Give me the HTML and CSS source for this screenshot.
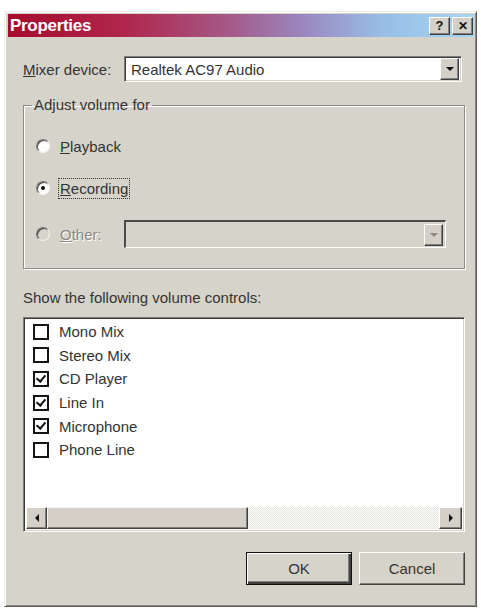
FILE: index.html
```html
<!DOCTYPE html>
<html lang="en">
<head>
    <meta charset="UTF-8">
    <title>Properties</title>
    <link rel="stylesheet" href="styles.css">
</head>
<body>
    <div class="ventana">
        <div class="titulo">
            <span class="titulo-texto">Properties</span>
            <div class="titulo-botones">
                <span class="boton-titulo">?</span>
                <span class="boton-titulo cerrar">✕</span>
            </div>
        </div>

        <div class="contenido">
            <div class="fila-mixer">
                <span class="etiqueta-mixer"><u>M</u>ixer device:</span>
                <div class="combo">
                    <span class="combo-texto">Realtek AC97 Audio</span>
                    <span class="combo-flecha"><i class="triangulo"></i></span>
                </div>
            </div>

            <fieldset class="grupo">
                <legend>Adjust volume for</legend>
                <div class="opcion">
                    <span class="radio"></span>
                    <span><u>P</u>layback</span>
                </div>
                <div class="opcion">
                    <span class="radio marcado"></span>
                    <span class="foco"><u>R</u>ecording</span>
                </div>
                <div class="opcion desactivada">
                    <span class="radio-etiqueta">
                        <span class="radio"></span>
                        <span><u>O</u>ther:</span>
                    </span>
                    <div class="combo combo-off">
                        <span class="combo-texto"></span>
                        <span class="combo-flecha"><i class="triangulo"></i></span>
                    </div>
                </div>
            </fieldset>

            <p class="texto-lista">Show the following volume controls:</p>

            <div class="lista">
                <div class="items">
                    <div class="item"><span class="check"></span>Mono Mix</div>
                    <div class="item"><span class="check"></span>Stereo Mix</div>
                    <div class="item"><span class="check si"></span>CD Player</div>
                    <div class="item"><span class="check si"></span>Line In</div>
                    <div class="item"><span class="check si"></span>Microphone</div>
                    <div class="item"><span class="check"></span>Phone Line</div>
                </div>
                <div class="scroll">
                    <span class="scroll-boton"><i class="flecha-izq"></i></span>
                    <span class="scroll-barra"></span>
                    <span class="scroll-pista"></span>
                    <span class="scroll-boton"><i class="flecha-der"></i></span>
                </div>
            </div>

            <div class="acciones">
                <button class="boton defecto">OK</button>
                <button class="boton">Cancel</button>
            </div>
        </div>
    </div>
</body>
</html>
```

FILE: styles.css
```css
body {
    margin: 0;
    padding: 11px 4px 0 4px;
    background-color: #ffffff;
    font-family: "Liberation Sans", Arial, sans-serif;
    font-size: 15px;
    color: #333333;
}
.ventana {
    width: 473px;
    height: 596px;
    box-sizing: border-box;
    background-color: #d6d3cb;
    border: 1px solid;
    border-color: #eeede8 #5a5a5a #5a5a5a #eeede8;
    box-shadow: inset 1px 1px #ffffff, inset -1px -1px #8e8c86;
    padding: 2px;
    display: flex;
    flex-direction: column;
}
.titulo {
    height: 23px;
    margin-left: 1px;
    display: flex;
    align-items: center;
    justify-content: space-between;
    background: linear-gradient(to right, #a60c2c 0%, #b0264c 25%, #a55887 47%, #9a86bd 63%, #98bde6 80%, #a6d6f0 100%);
}
.titulo-texto {
    color: #ffffff;
    font-weight: bold;
    font-size: 17px;
    padding-left: 2px;
    letter-spacing: -0.3px;
}
.titulo-botones {
    display: flex;
    gap: 2px;
    padding-right: 1px;
}
.boton-titulo {
    width: 21px;
    height: 18px;
    box-sizing: border-box;
    background-color: #d4d0c8;
    border: 1px solid;
    border-color: #ffffff #404040 #404040 #ffffff;
    box-shadow: inset -1px -1px #808080;
    display: flex;
    align-items: center;
    justify-content: center;
    font-weight: bold;
    font-size: 13px;
    color: #111;
}
.cerrar {
    font-size: 12px;
}
.contenido {
    flex: 1;
    display: flex;
    flex-direction: column;
    padding: 19px 9px 0 16px;
}
.fila-mixer {
    display: flex;
    align-items: center;
    height: 26px;
}
.etiqueta-mixer {
    width: 101px;
}
.combo {
    flex: 1;
    height: 26px;
    box-sizing: border-box;
    margin-right: 3px;
    background-color: #ffffff;
    border: 1px solid;
    border-color: #7f7d78 #ffffff #ffffff #7f7d78;
    box-shadow: inset 1px 1px #3a3a3a, inset -1px -1px #d4d0c8;
    display: flex;
    align-items: center;
    padding: 2px;
}
.combo-texto {
    flex: 1;
    padding-left: 4px;
}
.combo-flecha {
    width: 19px;
    height: 22px;
    box-sizing: border-box;
    background-color: #d4d0c8;
    border: 1px solid;
    border-color: #ffffff #404040 #404040 #ffffff;
    box-shadow: inset -1px -1px #808080;
    display: flex;
    align-items: center;
    justify-content: center;
}
.triangulo {
    width: 0;
    height: 0;
    border-left: 4px solid transparent;
    border-right: 4px solid transparent;
    border-top: 4px solid #111;
}
.grupo {
    margin: 15px 0 0 0;
    padding: 23px 18px 20px 12px;
    border: 1px solid #8f8c86;
    box-shadow: inset 1px 1px #ffffff, 1px 1px #ffffff;
    display: flex;
    flex-direction: column;
    gap: 22px;
}
.grupo legend {
    margin-left: -4px;
    padding: 0 2px;
    line-height: 16px;
}
.opcion {
    display: flex;
    align-items: center;
    gap: 10px;
    height: 20px;
}
.radio {
    width: 14px;
    height: 14px;
    box-sizing: border-box;
    border-radius: 50%;
    background-color: #ffffff;
    border: 1px solid;
    border-color: #7a7873 #f4f4f4 #f4f4f4 #7a7873;
    box-shadow: inset 1px 1px #404040;
    display: flex;
    align-items: center;
    justify-content: center;
}
.marcado::after {
    content: "";
    width: 4px;
    height: 4px;
    border-radius: 50%;
    background-color: #111;
}
.foco {
    outline: 1px dotted #333;
    outline-offset: 1px;
}
.desactivada {
    height: 28px;
    gap: 0;
    color: #8c8982;
    text-shadow: 1px 1px #ffffff;
}
.radio-etiqueta {
    width: 88px;
    display: flex;
    align-items: center;
    gap: 10px;
}
.desactivada .radio {
    background-color: #d6d3cb;
}
.combo-off {
    height: 28px;
    margin-right: 0;
    background-color: #d6d3cb;
    border-width: 2px 1px 1px 2px;
    border-color: #4a4a4a #ffffff #ffffff #4a4a4a;
    box-shadow: none;
}
.combo-off .triangulo {
    border-top-color: #8c8982;
}
.texto-lista {
    margin: 21px 0 0 0;
    line-height: 16px;
}
.lista {
    margin-top: 11px;
    height: 215px;
    box-sizing: border-box;
    background-color: #ffffff;
    border: 1px solid;
    border-color: #7f7d78 #ffffff #ffffff #7f7d78;
    box-shadow: inset 1px 1px #3a3a3a, inset -1px -1px #d4d0c8;
    padding: 2px;
    display: flex;
    flex-direction: column;
}
.items {
    flex: 1;
    padding-left: 7px;
}
.item {
    height: 23.6px;
    display: flex;
    align-items: center;
    gap: 10px;
}
.check {
    width: 16px;
    height: 16px;
    box-sizing: border-box;
    border: 2px solid #151515;
    position: relative;
}
.si::after {
    content: "";
    position: absolute;
    left: 3px;
    top: 0px;
    width: 4px;
    height: 7px;
    border-right: 2px solid #151515;
    border-bottom: 2px solid #151515;
    transform: rotate(40deg);
}
.scroll {
    height: 22px;
    display: flex;
}
.scroll-boton {
    width: 21px;
    box-sizing: border-box;
    background-color: #d4d0c8;
    border: 1px solid;
    border-color: #ffffff #404040 #404040 #ffffff;
    box-shadow: inset -1px -1px #808080;
    display: flex;
    align-items: center;
    justify-content: center;
}
.scroll-boton:last-child {
    width: 23px;
}
.flecha-izq {
    border-top: 4px solid transparent;
    border-bottom: 4px solid transparent;
    border-right: 4px solid #111;
}
.flecha-der {
    border-top: 4px solid transparent;
    border-bottom: 4px solid transparent;
    border-left: 4px solid #111;
}
.scroll-barra {
    width: 201px;
    box-sizing: border-box;
    background-color: #d4d0c8;
    border: 1px solid;
    border-color: #f4f4f4 #404040 #404040 #f4f4f4;
    box-shadow: inset -1px -1px #808080;
}
.scroll-pista {
    flex: 1;
    background: repeating-conic-gradient(#e4e2dc 0 25%, #ffffff 0 50%) 0 0 / 2px 2px;
}
.acciones {
    margin-top: 20px;
    display: flex;
    justify-content: flex-end;
    gap: 7px;
}
.boton {
    width: 106px;
    height: 33px;
    box-sizing: border-box;
    font-family: "Liberation Sans", Arial, sans-serif;
    font-size: 15px;
    color: #333333;
    background-color: #d6d3cb;
    border: 1px solid;
    border-color: #ffffff #404040 #404040 #ffffff;
    box-shadow: inset -1px -1px #808080;
    padding: 0;
}
.defecto {
    border: 1px solid #111;
    box-shadow: inset 1px 1px #ffffff, inset -2px -2px #404040, inset -3px -3px #808080;
}
```
